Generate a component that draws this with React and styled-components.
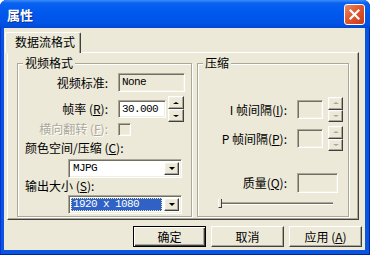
import styled, { createGlobalStyle, css } from 'styled-components';

const GlobalStyle = createGlobalStyle`
  html, body {
    margin: 0;
    padding: 0;
    background: #fff;
  }
  body {
    font-family: "Noto Sans CJK SC", sans-serif;
  }
`;

const raised = css`
  background: #ece9d8;
  border: 1px solid;
  border-color: #fff #404040 #404040 #fff;
  box-shadow: inset -1px -1px #aca899, inset 1px 1px #f1efe2;
`;

const sunken = css`
  border: 1px solid;
  border-color: #aca899 #fff #fff #aca899;
  box-shadow: inset 1px 1px #716f64, inset -1px -1px #f1efe2;
`;

const Window = styled.div`
  width: 370px;
  height: 255px;
  box-sizing: border-box;
  display: flex;
  flex-direction: column;
  background: #0a55e0;
  border-radius: 7px 7px 0 0;
  overflow: hidden;
  box-shadow: inset 0 -1px #00229a, inset 1px 0 #0831d9, inset -1px 0 #0024a8;
`;

const TitleBar = styled.div`
  height: 28px;
  flex: none;
  display: flex;
  align-items: center;
  justify-content: space-between;
  padding: 0 5px 0 7px;
  background: linear-gradient(
    #3d8ef8 0,
    #0a62f2 3px,
    #0058ee 45%,
    #0053e4 85%,
    #0047d2 100%
  );
`;

const Title = styled.span`
  color: #fff;
  font-size: 13px;
  font-weight: bold;
  text-shadow: 1px 1px #0f2c8a;
`;

const CloseButton = styled.div`
  width: 21px;
  height: 21px;
  box-sizing: border-box;
  border: 1px solid #fff;
  border-radius: 3px;
  background: linear-gradient(135deg, #e98a6c 0%, #e0582e 45%, #c8391a 100%);
  display: grid;
  place-items: center;
`;

const Body = styled.div`
  flex: 1;
  margin: 0 5px 5px 4px;
  background: #ece9d8;
  padding: 4px 3px 0 3px;
  display: flex;
  flex-direction: column;
  font-size: 12px;
  color: #000;
`;

const TabStrip = styled.div`
  height: 20px;
  display: flex;
  align-items: flex-start;
  margin-left: -2px;
`;

const Tab = styled.div`
  position: relative;
  z-index: 1;
  width: 76px;
  height: 21px;
  box-sizing: border-box;
  padding-left: 9px;
  background: #ece9d8;
  border-top: 1px solid #fff;
  border-left: 1px solid #fff;
  border-right: 1px solid #404040;
  box-shadow: inset -1px 0 #aca899;
  border-radius: 2px 2px 0 0;
  line-height: 18px;
  white-space: nowrap;
`;

const Panel = styled.div`
  height: 168px;
  box-sizing: border-box;
  margin-right: 3px;
  border: 1px solid;
  border-color: #fff #404040 #404040 #fff;
  box-shadow: inset -1px -1px #aca899;
  display: flex;
  gap: 5px;
  padding: 3px 8px 2px 9px;
`;

const Group = styled.fieldset`
  margin: 0;
  padding: 0;
  min-width: 0;
  width: ${(p) => p.$width}px;
  box-sizing: border-box;
  border: 1px solid #aca899;
  box-shadow: inset 1px 1px #fff, 1px 1px #fff;
  display: flex;
  flex-direction: column;
`;

const Legend = styled.legend`
  margin-left: 5px;
  padding: 0 2px;
  background: #ece9d8;
  font-size: 12px;
  line-height: 14px;
`;

const Row = styled.div`
  display: flex;
  align-items: center;
  height: ${(p) => p.$h}px;
  margin-top: ${(p) => p.$mt}px;
`;

const Label = styled.span`
  width: ${(p) => p.$w}px;
  flex: none;
  text-align: right;
  margin-right: 10px;
  line-height: 14px;
  white-space: nowrap;
  ${(p) =>
    p.$disabled &&
    css`
      color: #aca899;
      text-shadow: 1px 1px #fff;
    `}
`;

const PlainLabel = styled.div`
  height: 14px;
  line-height: 14px;
  padding-left: 7px;
  margin-top: ${(p) => p.$mt}px;
  white-space: nowrap;
`;

const Mn = styled.u`
  text-decoration: underline;
  text-underline-offset: 1px;
`;

const Field = styled.div`
  ${sunken};
  width: ${(p) => p.$w}px;
  height: ${(p) => p.$h}px;
  box-sizing: border-box;
  background: ${(p) => (p.$white ? '#fff' : '#ece9d8')};
  padding-left: 3px;
  font-family: "Liberation Mono", monospace;
  font-size: 11px;
  letter-spacing: -0.6px;
  line-height: ${(p) => p.$h - 2}px;
  flex: none;
`;

const Spinner = styled.div`
  display: flex;
  flex-direction: column;
  width: ${(p) => p.$w}px;
  height: ${(p) => p.$h}px;
  margin-left: ${(p) => p.$ml}px;
  flex: none;
`;

const SpinButton = styled.div`
  ${raised};
  flex: 1;
  box-sizing: border-box;
  display: grid;
  place-items: center;
`;

const Arrow = styled.span`
  width: 0;
  height: 0;
  border-left: ${(p) => p.$size}px solid transparent;
  border-right: ${(p) => p.$size}px solid transparent;
  ${(p) =>
    p.$down
      ? css`border-top: ${p.$size - 0.5}px solid ${p.$color};`
      : css`border-bottom: ${p.$size - 0.5}px solid ${p.$color};`}
`;

const CheckBox = styled.div`
  ${sunken};
  width: 13px;
  height: 13px;
  box-sizing: border-box;
  background: #ece9d8;
  flex: none;
`;

const Combo = styled.div`
  ${sunken};
  width: 114px;
  height: 19px;
  box-sizing: border-box;
  margin-left: 50px;
  margin-top: ${(p) => p.$mt}px;
  background: #fff;
  display: flex;
  padding: 2px;
`;

const ComboValue = styled.div`
  flex: 1;
  margin-right: 2px;
  padding-left: 2px;
  font-family: "Liberation Mono", monospace;
  font-size: 11px;
  letter-spacing: -0.6px;
  line-height: 13px;
  box-sizing: border-box;
  ${(p) =>
    p.$selected &&
    css`
      background: #2f62c4;
      color: #fff;
      outline: 1px dotted #f0e2a0;
      outline-offset: -1px;
    `}
`;

const DropButton = styled.div`
  ${raised};
  width: 15px;
  box-sizing: border-box;
  display: grid;
  place-items: center;
`;

const Slider = styled.div`
  position: relative;
  width: 115px;
  height: 9px;
  margin: 6px 0 0 20px;
  display: flex;
  align-items: center;
`;

const Track = styled.div`
  width: 100%;
  height: 3px;
  box-sizing: border-box;
  border-top: 1px solid #aca899;
  border-bottom: 1px solid #fff;
  background: #716f64;
`;

const Thumb = styled.div`
  position: absolute;
  left: 0;
  top: 0;
  width: 4px;
  height: 9px;
  box-sizing: border-box;
  border-left: 1px solid #fff;
  border-bottom: 1px solid #404040;
  border-right: 1px solid #404040;
  background: #ece9d8;
`;

const ButtonRow = styled.div`
  display: flex;
  justify-content: flex-end;
  gap: 5px;
  margin-top: 6px;
`;

const Button = styled.div`
  width: 73px;
  height: 21px;
  box-sizing: border-box;
  background: #ece9d8;
  text-align: center;
  white-space: nowrap;
  font-size: 12px;
  line-height: 19px;
  ${(p) =>
    p.$default
      ? css`
          border: 1px solid #000;
          box-shadow: inset 1px 1px #fff, inset -1px -1px #404040,
            inset -2px -2px #aca899;
        `
      : css`
          border: 1px solid;
          border-color: #fff #404040 #404040 #fff;
          box-shadow: inset -1px -1px #aca899;
        `}
`;

function SpinBox({ w, h, ml, disabled }) {
  const color = disabled ? '#aca899' : '#000';
  return (
    <Spinner $w={w} $h={h} $ml={ml}>
      <SpinButton>
        <Arrow $size={3} $color={color} />
      </SpinButton>
      <SpinButton>
        <Arrow $size={3} $color={color} $down />
      </SpinButton>
    </Spinner>
  );
}

function ComboBox({ value, selected, mt }) {
  return (
    <Combo $mt={mt}>
      <ComboValue $selected={selected}>{value}</ComboValue>
      <DropButton>
        <Arrow $size={3.5} $color="#000" $down />
      </DropButton>
    </Combo>
  );
}

export default function App() {
  return (
    <>
      <GlobalStyle />
      <Window>
        <TitleBar>
          <Title>属性</Title>
          <CloseButton>
            <svg width="13" height="13" viewBox="0 0 13 13">
              <path
                d="M2.5 2.5 L10.5 10.5 M10.5 2.5 L2.5 10.5"
                stroke="#fff"
                strokeWidth="2.2"
                strokeLinecap="square"
              />
            </svg>
          </CloseButton>
        </TitleBar>
        <Body>
          <TabStrip>
            <Tab>数据流格式</Tab>
          </TabStrip>
          <Panel>
            <Group $width={175}>
              <Legend>视频格式</Legend>
              <Row $h={19} $mt={3}>
                <Label $w={90}>视频标准:</Label>
                <Field $w={67} $h={19}>None</Field>
              </Row>
              <Row $h={26} $mt={4}>
                <Label $w={90}>
                  帧率 (<Mn>R</Mn>):
                </Label>
                <Field $w={48} $h={18} $white>
                  30.000
                </Field>
                <SpinBox w={16} h={26} ml={2} />
              </Row>
              <Row $h={14} $mt={0}>
                <Label $w={90} $disabled>
                  横向翻转 (<Mn>F</Mn>):
                </Label>
                <CheckBox />
              </Row>
              <PlainLabel $mt={5}>
                颜色空间/压缩 (<Mn>C</Mn>):
              </PlainLabel>
              <ComboBox value="MJPG" mt={4} />
              <PlainLabel $mt={1}>
                输出大小 (<Mn>S</Mn>):
              </PlainLabel>
              <ComboBox value="1920 x 1080" selected mt={2} />
            </Group>
            <Group $width={152}>
              <Legend>压缩</Legend>
              <Row $h={25} $mt={27}>
                <Label $w={89}>
                  I 帧间隔(<Mn>I</Mn>):
                </Label>
                <Field $w={26} $h={19} />
                <SpinBox w={15} h={25} ml={5} disabled />
              </Row>
              <Row $h={25} $mt={4}>
                <Label $w={89}>
                  P 帧间隔(<Mn>P</Mn>):
                </Label>
                <Field $w={26} $h={19} />
                <SpinBox w={15} h={25} ml={5} disabled />
              </Row>
              <Row $h={20} $mt={22}>
                <Label $w={89}>
                  质量(<Mn>Q</Mn>):
                </Label>
                <Field $w={41} $h={20} />
              </Row>
              <Slider>
                <Track />
                <Thumb />
              </Slider>
            </Group>
          </Panel>
          <ButtonRow>
            <Button $default>确定</Button>
            <Button>取消</Button>
            <Button>
              应用 (<Mn>A</Mn>)
            </Button>
          </ButtonRow>
        </Body>
      </Window>
    </>
  );
}
